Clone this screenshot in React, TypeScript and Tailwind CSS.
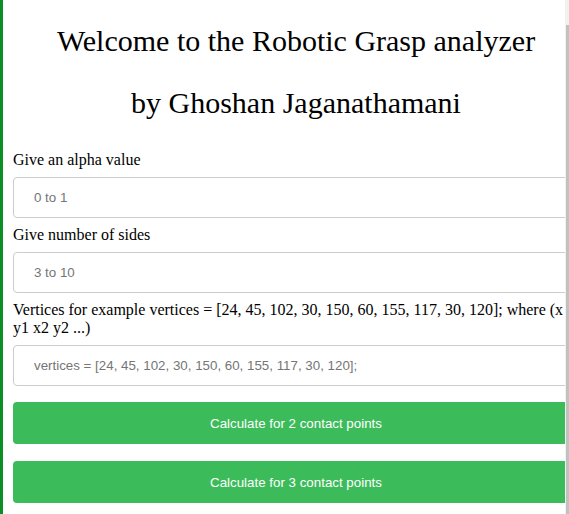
import React from "react";

const inputCls =
  "block h-[41px] w-full rounded-[4px] border border-[#cccccc] px-[20px] font-['Liberation_Sans',Arial,sans-serif] text-[13.33px] outline-none placeholder:text-[#757575]";
const labelCls = "block text-[16px] leading-[18px] text-black";
const buttonCls =
  "block h-[42px] w-full rounded-[4px] bg-[#3cbb5a] pt-[1px] font-['Liberation_Sans',Arial,sans-serif] text-[13.33px] text-white";

export default function App() {
  return (
    <div className="relative flex h-[514px] w-[569px] overflow-hidden bg-white">
      <div className="h-full w-[3px] shrink-0 bg-[#0b8f24]" />
      <div className="flex w-[586px] shrink-0 flex-col px-[10px] font-['Liberation_Serif','Times_New_Roman',serif]">
        <h1 className="mt-[24px] text-center text-[30px] font-normal leading-[33px] text-black">
          Welcome to the Robotic Grasp analyzer
        </h1>
        <h2 className="mt-[29px] text-center text-[30px] font-normal leading-[33px] text-black">
          by Ghoshan Jaganathamani
        </h2>
        <label className={`${labelCls} mb-[8px] mt-[32px]`}>Give an alpha value</label>
        <input className={inputCls} placeholder="0 to 1" />
        <label className={`${labelCls} my-[8px]`}>Give number of sides</label>
        <input className={inputCls} placeholder="3 to 10" />
        <label className={`${labelCls} my-[8px]`}>
          Vertices for example vertices = [24, 45, 102, 30, 150, 60, 155, 117, 30, 120]; where (x y1 x2 y2 ...)
        </label>
        <input
          className={inputCls}
          placeholder="vertices = [24, 45, 102, 30, 150, 60, 155, 117, 30, 120];"
        />
        <button className={`${buttonCls} mt-[16px]`}>Calculate for 2 contact points</button>
        <button className={`${buttonCls} mt-[17px]`}>Calculate for 3 contact points</button>
      </div>
      <div className="absolute right-0 top-0 flex h-full w-[4px] flex-col bg-[#f1f1f1] pl-[1px] pt-[25px]">
        <div className="w-[3px] flex-1 bg-[#c1c1c1]" />
      </div>
    </div>
  );
}
